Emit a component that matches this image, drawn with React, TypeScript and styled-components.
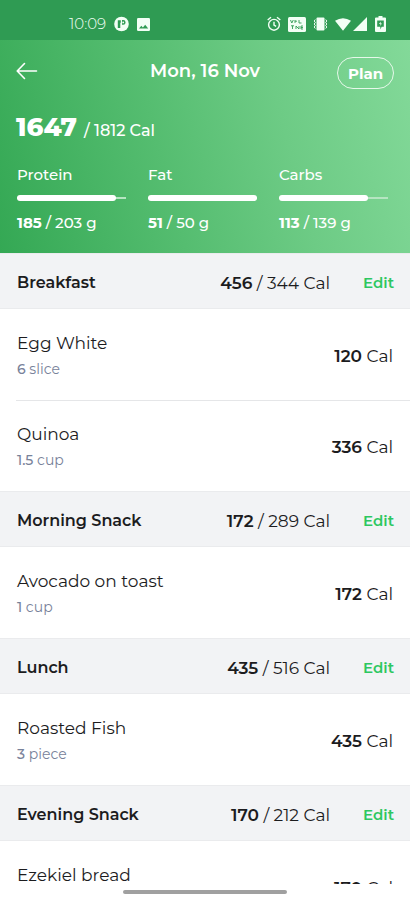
import React from "react";
import styled, { createGlobalStyle } from "styled-components";

const Global = createGlobalStyle`
  * { box-sizing: border-box; }
  body {
    margin: 0;
    background: #ffffff;
    color: #1c1c1e;
    font-family: Montserrat, Inter, "Liberation Sans", sans-serif;
  }
  button { font-family: inherit; cursor: pointer; }
  h1, h2, h3, p, ul { margin: 0; padding: 0; font-weight: inherit; }
`;

const Screen = styled.div`
  display: flex;
  flex-direction: column;
  height: 100vh;
  overflow: hidden;
`;

const StatusBar = styled.div`
  flex: none;
  display: flex;
  align-items: center;
  justify-content: space-between;
  height: 40px;
  padding: 8px 24px 0 69px;
  background: #2f9b53;
  color: #f2fff5;
`;

const StatusGroup = styled.div<{ $gap: number }>`
  display: flex;
  align-items: center;
  gap: ${(p) => p.$gap}px;
  svg { display: block; }
`;

const Clock = styled.time`
  font-size: 15px;
  line-height: 16px;
  font-weight: 300;
`;

const Summary = styled.header`
  flex: none;
  display: flex;
  flex-direction: column;
  height: 213px;
  color: #ffffff;
  background: linear-gradient(75deg, #34a854 0%, #55bd70 40%, #6dcb85 68%, #83d999 100%);
`;

const TopBar = styled.div`
  display: grid;
  grid-template-columns: 1fr auto 1fr;
  align-items: center;
  height: 62px;
  padding: 0 16px;
`;

const BackButton = styled.button`
  justify-self: start;
  display: block;
  padding: 0;
  border: 0;
  background: none;
  color: inherit;
  svg { display: block; }
`;

const Title = styled.h1`
  font-size: 18px;
  line-height: 24px;
  font-weight: 600;
`;

const PlanButton = styled.button`
  justify-self: end;
  width: 57px;
  height: 32px;
  margin-top: 4px;
  padding: 0;
  border: 1px solid #e6f8ea;
  border-radius: 16px;
  background: none;
  color: inherit;
  font-size: 15px;
  font-weight: 700;
`;

const Total = styled.p`
  display: flex;
  align-items: baseline;
  gap: 7px;
  padding: 9px 16px 0;
  font-size: 16px;
  line-height: 32px;
  font-weight: 500;
  strong { font-size: 26px; font-weight: 800; }
`;

const Macros = styled.div`
  display: grid;
  grid-template-columns: repeat(3, 1fr);
  gap: 22px;
  padding: 18px 22px 0 17px;
`;

const Macro = styled.div`
  display: flex;
  flex-direction: column;
  font-size: 15px;
  line-height: 20px;
  font-weight: 500;
`;

const Track = styled.div`
  display: flex;
  align-items: center;
  height: 6px;
  margin: 10px 0 12px;
  background: linear-gradient(#b5e5c1, #b5e5c1) center / 100% 2px no-repeat;
`;

const Fill = styled.div`
  height: 6px;
  border-radius: 3px;
  background: #ffffff;
`;

const MacroValue = styled.p`
  font-size: 15px;
  strong { font-weight: 700; }
`;

const Meals = styled.main`
  flex: 1;
  min-height: 0;
  overflow: hidden;
`;

const MealHeader = styled.div`
  display: flex;
  align-items: center;
  height: 56px;
  padding: 4px 16px 0 17px;
  background: #f2f3f5;
  border-top: 1px solid #eaebed;
  border-bottom: 1px solid #eaebed;
`;

const MealName = styled.h2`
  flex: 1;
  font-size: 16px;
  line-height: 24px;
  font-weight: 600;
`;

const Calories = styled.p`
  font-size: 17px;
  line-height: 24px;
  strong { font-weight: 600; }
`;

const EditButton = styled.button`
  width: 64px;
  padding: 0;
  border: 0;
  background: none;
  color: #2dc760;
  font-size: 15px;
  line-height: 24px;
  font-weight: 600;
  text-align: right;
`;

const FoodList = styled.ul`
  list-style: none;
`;

const Food = styled.li`
  display: flex;
  align-items: center;
  justify-content: space-between;
  height: 91px;
  margin-left: 16px;
  padding: 2px 17px 0 1px;
  & + & { border-top: 1px solid #e5e6e8; }
`;

const FoodName = styled.h3`
  font-size: 17px;
  line-height: 26px;
`;

const Portion = styled.p`
  min-height: 26px;
  font-size: 14px;
  line-height: 26px;
  color: #78829a;
  strong { font-weight: 500; }
`;

const HomeArea = styled.footer`
  flex: none;
  display: flex;
  justify-content: center;
  height: 16px;
  padding-top: 6px;
  background: #ffffff;
`;

const HomeHandle = styled.div`
  width: 40%;
  height: 4px;
  border-radius: 2px;
  background: #a0a0a0;
`;

const macros = [
  { name: "Protein", value: 185, goal: 203 },
  { name: "Fat", value: 51, goal: 50 },
  { name: "Carbs", value: 113, goal: 139 },
];

type FoodEntry = { name: string; amount?: string; unit?: string; cal: number };
type Meal = { name: string; value: number; goal: number; foods: FoodEntry[] };

const meals: Meal[] = [
  {
    name: "Breakfast", value: 456, goal: 344,
    foods: [
      { name: "Egg White", amount: "6", unit: "slice", cal: 120 },
      { name: "Quinoa", amount: "1.5", unit: "cup", cal: 336 },
    ],
  },
  { name: "Morning Snack", value: 172, goal: 289, foods: [{ name: "Avocado on toast", amount: "1", unit: "cup", cal: 172 }] },
  { name: "Lunch", value: 435, goal: 516, foods: [{ name: "Roasted Fish", amount: "3", unit: "piece", cal: 435 }] },
  { name: "Evening Snack", value: 170, goal: 212, foods: [{ name: "Ezekiel bread", cal: 170 }] },
];

const NotificationIcon = () => (
  <svg width="15" height="16" viewBox="0 0 15 16" aria-hidden="true">
    <circle cx="7.5" cy="8" r="7.3" fill="currentColor" />
    <path d="M3.8 4.2h3v2.6H6.3V12H3.8zM8 4h1.2a2.4 2.4 0 0 1 0 4.8H8z" fill="#2f9b53" />
    <circle cx="9.2" cy="6.4" r="0.9" fill="currentColor" />
  </svg>
);

const PictureIcon = () => (
  <svg width="13" height="13" viewBox="0 0 13 13" aria-hidden="true">
    <rect width="13" height="13" rx="1.2" fill="currentColor" />
    <path d="M2 10.5 4.3 7.8l1.6 1.6 2.3-2.6 3 3.7z" fill="#2f9b53" />
  </svg>
);

const AlarmIcon = () => (
  <svg width="14" height="16" viewBox="0 0 14 16" fill="none" stroke="currentColor" strokeWidth="1.4" aria-hidden="true">
    <circle cx="7" cy="8.8" r="5.4" />
    <path d="M7 5.8v3.3l2.1 1.3M.7 4 4 1.2M13.3 4 10 1.2" />
  </svg>
);

const VolteIcon = () => (
  <svg width="18" height="15" viewBox="0 0 18 15" aria-hidden="true">
    <rect width="18" height="15" rx="1.5" fill="currentColor" />
    <path d="m2.5 3 1.3 3 1.5-3M7 4.2h2M11 3v3h2.5M7 3v3M3 8.8h3M4.5 8.8V12M8 12V9l3 3V9M15 9h-2v3h2M13 10.5h2" fill="none" stroke="#2f9b53" strokeWidth="0.9" />
  </svg>
);

const VibrateIcon = () => (
  <svg width="15" height="14" viewBox="0 0 15 14" aria-hidden="true">
    <rect x="3.5" y="0.5" width="8" height="13" rx="1" fill="currentColor" />
    <path d="M2.3 2.5 1.2 4l1.1 1.5L1.2 7l1.1 1.5-1.1 1.5 1.1 1.5M12.7 2.5 13.8 4l-1.1 1.5L13.8 7l-1.1 1.5 1.1 1.5-1.1 1.5" fill="none" stroke="currentColor" />
  </svg>
);

const SignalIcons = () => (
  <svg width="33" height="15" viewBox="0 0 33 15" fill="currentColor" aria-hidden="true">
    <path d="M0 3.8Q8 -1.4 16 3.8L8 13.8zM32 0v14H18z" />
  </svg>
);

const BatteryIcon = () => (
  <svg width="11" height="16" viewBox="0 0 11 16" aria-hidden="true">
    <path d="M3.5 0h4v1.5H10q1 0 1 1V15q0 1-1 1H1q-1 0-1-1V2.5q0-1 1-1h2.5z" fill="currentColor" />
    <path d="M2.2 4.5h6.6v6.2H6.7L5.3 13.5v-2.8H2.2z" fill="#2f9b53" />
    <path d="M5.8 5.4 4 8h1.5l-.4 2L7 7.4H5.6z" fill="currentColor" />
  </svg>
);

const BackArrow = () => (
  <svg width="22" height="18" viewBox="0 0 22 18" fill="none" stroke="currentColor" strokeWidth="1.6" strokeLinecap="round" strokeLinejoin="round" aria-hidden="true">
    <path d="M20.5 9H1.5M8.5 1.5 1.2 9l7.3 7.5" />
  </svg>
);

export default function App() {
  return (
    <Screen>
      <Global />
      <StatusBar>
        <StatusGroup $gap={8}>
          <Clock>10:09</Clock>
          <NotificationIcon />
          <PictureIcon />
        </StatusGroup>
        <StatusGroup $gap={7}>
          <AlarmIcon />
          <VolteIcon />
          <VibrateIcon />
          <SignalIcons />
          <BatteryIcon />
        </StatusGroup>
      </StatusBar>
      <Summary>
        <TopBar>
          <BackButton aria-label="Back"><BackArrow /></BackButton>
          <Title>Mon, 16 Nov</Title>
          <PlanButton>Plan</PlanButton>
        </TopBar>
        <Total><strong>1647</strong><span>/ 1812 Cal</span></Total>
        <Macros>
          {macros.map((m) => (
            <Macro key={m.name}>
              <span>{m.name}</span>
              <Track role="progressbar" aria-label={m.name} aria-valuenow={m.value} aria-valuemax={m.goal}>
                <Fill style={{ width: `${Math.min(100, (m.value / m.goal) * 100)}%` }} />
              </Track>
              <MacroValue><strong>{m.value}</strong> / {m.goal} g</MacroValue>
            </Macro>
          ))}
        </Macros>
      </Summary>
      <Meals>
        {meals.map((meal) => (
          <section key={meal.name}>
            <MealHeader>
              <MealName>{meal.name}</MealName>
              <Calories><strong>{meal.value}</strong> / {meal.goal} Cal</Calories>
              <EditButton aria-label={`Edit ${meal.name}`}>Edit</EditButton>
            </MealHeader>
            <FoodList>
              {meal.foods.map((food) => (
                <Food key={food.name}>
                  <div>
                    <FoodName>{food.name}</FoodName>
                    <Portion>{food.amount && <><strong>{food.amount}</strong> {food.unit}</>}</Portion>
                  </div>
                  <Calories><strong>{food.cal}</strong> Cal</Calories>
                </Food>
              ))}
            </FoodList>
          </section>
        ))}
      </Meals>
      <HomeArea><HomeHandle /></HomeArea>
    </Screen>
  );
}
